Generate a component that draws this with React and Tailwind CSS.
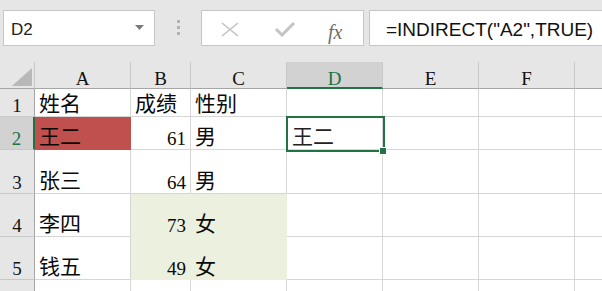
import clsx from 'clsx';

const CELL_FONT = { fontFamily: '"Liberation Serif", "Noto Sans CJK SC", serif' };

const COLS = ['A', 'B', 'C', 'D', 'E', 'F', 'G'];

// row data: label cells A..G
const ROWS = [
  ['姓名', '成绩', '性别', '', '', '', ''],
  ['王二', '61', '男', '王二', '', '', ''],
  ['张三', '64', '男', '', '', '', ''],
  ['李四', '73', '女', '', '', '', ''],
  ['钱五', '49', '女', '', '', '', ''],
  ['', '', '', '', '', '', ''],
];

function NameBox() {
  return (
    <div className="ml-[3px] w-[152px] h-[36px] bg-white border border-[#c6c6c6] flex items-center pt-[4px] pl-[7px] pr-[8px] justify-between">
      <span className="text-[17px] text-[#222]" style={{ fontFamily: '"Liberation Sans", sans-serif' }}>D2</span>
      <svg width="9" height="5" viewBox="0 0 9 5" className="-mt-[5px] mr-[2px]">
        <polygon points="0,0 9,0 4.5,5" fill="#7a7a7a" />
      </svg>
    </div>
  );
}

function FormulaBar() {
  return (
    <div className="h-[62px] bg-[#e6e6e6] flex items-start pt-[10px]">
      <NameBox />
      <div className="w-[46px] h-[36px] flex flex-col items-center justify-center gap-[3px] -mt-[1px]">
        <div className="w-[3px] h-[3px] bg-[#b3b3b3]" />
        <div className="w-[3px] h-[3px] bg-[#b3b3b3]" />
        <div className="w-[3px] h-[3px] bg-[#b3b3b3]" />
      </div>
      <div className="w-[163px] h-[36px] bg-white border border-[#c6c6c6] relative">
        <svg width="20" height="16" viewBox="0 0 20 16" className="absolute left-[18px] top-[11px]">
          <path d="M2 1 L18 14 M18 1 L2 14" stroke="#c2c2c2" strokeWidth="1.6" fill="none" />
        </svg>
        <svg width="22" height="16" viewBox="0 0 22 16" className="absolute left-[72px] top-[10px]">
          <path d="M2 8 L8 14 L20 2" stroke="#c4c4c4" strokeWidth="3" fill="none" />
        </svg>
        <span
          className="absolute left-[126px] top-[6px] text-[20px] italic text-[#6e6e6e]"
          style={{ fontFamily: '"Liberation Serif", serif' }}
        >
          fx
        </span>
      </div>
      <div className="ml-[5px] flex-1 h-[36px] bg-white border border-[#c6c6c6] border-r-0 flex items-center pt-[4px] pl-[16px]">
        <span className="text-[19px] text-[#111] whitespace-nowrap" style={{ fontFamily: '"Liberation Sans", sans-serif' }}>
          =INDIRECT("A2",TRUE)
        </span>
      </div>
    </div>
  );
}

function ColHeader({ letter }) {
  const active = letter === 'D';
  return (
    <div
      className={clsx(
        'flex items-end justify-center text-[19px] leading-none border-r border-r-[#c8c8c8]',
        active ? 'bg-[#d2d2d2] text-[#217346] border-b-2 border-b-[#217346]' : 'bg-[#e6e6e6] text-[#111] border-b border-b-[#a6a6a6]'
      )}
      style={CELL_FONT}
    >
      <span className={active ? '-mb-[1px]' : ''}>{letter}</span>
    </div>
  );
}

function RowHeader({ n }) {
  const active = n === 2;
  return (
    <div
      className={clsx(
        'flex items-end justify-center pb-[1px] text-[19px] leading-none border-b border-b-[#c8c8c8]',
        active ? 'bg-[#d2d2d2] text-[#217346] border-r-2 border-r-[#217346]' : 'bg-[#e6e6e6] text-[#111] border-r border-r-[#a6a6a6]'
      )}
      style={CELL_FONT}
    >
      {n}
    </div>
  );
}

function Cell({ row, col, value }) {
  const isNum = value !== '' && !isNaN(Number(value));
  const red = row === 2 && col === 'A';
  const green = (row === 4 || row === 5) && (col === 'B' || col === 'C');
  const selected = row === 2 && col === 'D';
  return (
    <div
      className={clsx(
        'relative flex items-end pb-[1px] leading-none whitespace-nowrap border-r border-b',
        isNum ? 'justify-end pr-[4px] text-[19px]' : 'justify-start pl-[4px] text-[21px]',
        red && 'bg-[#c0504d] border-[#c0504d]',
        green && 'bg-[#ebf1de] border-[#ebf1de]',
        !red && !green && 'bg-white border-[#d6d6d6]',
        selected ? 'text-[#222] pl-[5px] z-10' : 'text-[#0a0a0a]'
      )}
      style={CELL_FONT}
    >
      {value}
      {selected && (
        <>
          <div className="absolute -left-[1px] -top-[1px] w-[99px] h-[36px] border-2 border-[#217346]" />
          <div className="absolute left-[93px] top-[31px] w-[6px] h-[6px] bg-[#217346] outline outline-1 outline-white" />
        </>
      )}
    </div>
  );
}

function RowCells({ n, cells }) {
  return (
    <>
      <RowHeader n={n} />
      {cells.map((v, j) => (
        <Cell key={j} row={n} col={COLS[j]} value={v} />
      ))}
    </>
  );
}

export default function App() {
  return (
    <div className="w-[602px] h-[291px] overflow-hidden bg-white">
      <FormulaBar />
      <div className="grid grid-cols-[35px_96px_60px_96px_96px_96px_96px_96px] grid-rows-[27px_28px_33px_44px_43px_43px_43px] h-[229px] overflow-hidden">
        {/* corner */}
        <div className="bg-[#e6e6e6] border-r border-r-[#c8c8c8] border-b border-b-[#a6a6a6] relative">
          <svg width="35" height="27" viewBox="0 0 35 27" className="absolute left-0 top-0">
            <polygon points="32,6 32,24 12,24" fill="#b8b8b8" />
          </svg>
        </div>
        {COLS.map((c) => (
          <ColHeader key={c} letter={c} />
        ))}

        {ROWS.map((cells, i) => (
          <RowCells key={i} n={i + 1} cells={cells} />
        ))}
      </div>
    </div>
  );
}
